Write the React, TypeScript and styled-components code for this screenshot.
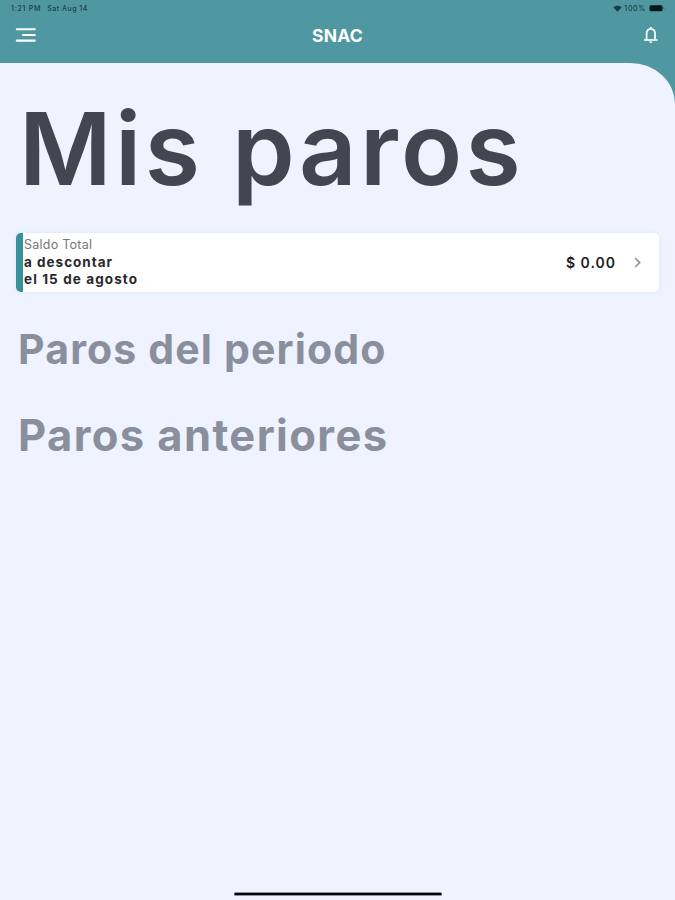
import React from 'react';
import styled, { createGlobalStyle } from 'styled-components';

const GlobalStyle = createGlobalStyle`
  * { box-sizing: border-box; }
  body { margin: 0; background: #4f98a1; }
`;

const Screen = styled.div`
  width: 100%;
  height: 900px;
  display: flex;
  flex-direction: column;
  overflow: hidden;
  background: #4f98a1;
  font-family: Inter, "Liberation Sans", sans-serif;
`;

const StatusBar = styled.div`
  height: 16px;
  padding: 1px 10px 0 11px;
  display: flex;
  align-items: center;
  justify-content: space-between;
  color: #173f47;
  font-size: 7px;
  font-weight: 500;
  line-height: 15px;
  white-space: pre;
`;

const StatusGroup = styled.div<{ $gap: number }>`
  display: flex;
  align-items: center;
  gap: ${(p) => p.$gap}px;
`;

const StatusText = styled.span<{ $spacing: number }>`
  letter-spacing: ${(p) => p.$spacing}px;
`;

const NavBar = styled.header`
  height: 47px;
  padding: 0 16px 9px 15px;
  display: grid;
  grid-template-columns: 22px 1fr 22px;
  align-items: center;
`;

const NavTitle = styled.div`
  color: #fff;
  font-size: 17.5px;
  font-weight: 650;
  line-height: 22px;
  letter-spacing: 0.25px;
  text-align: center;
  padding: 1px 0 0 1px;
`;

const IconButton = styled.button<{ $end?: boolean }>`
  display: flex;
  justify-content: ${(p) => (p.$end ? 'flex-end' : 'flex-start')};
  padding: 0;
  border: 0;
  background: none;
  color: #fff;
`;

const Content = styled.main`
  flex: 1;
  padding: 36px 16px 4px;
  display: flex;
  flex-direction: column;
  background: #eef3ff;
  border-top-right-radius: 45px 41px;
`;

const Title = styled.h1`
  margin: 0 0 34px 3px;
  color: #424650;
  font-size: 100.5px;
  font-weight: 600;
  line-height: 100px;
  letter-spacing: 3.35px;
  white-space: nowrap;
`;

const Card = styled.section`
  height: 59px;
  padding: 0 16px 0 1px;
  display: flex;
  align-items: center;
  justify-content: space-between;
  background: #fff;
  border-left: 7px solid #37909a;
  border-radius: 5px;
  box-shadow: 0 0 5px rgba(120, 150, 210, 0.12);
`;

const CardText = styled.div`
  display: flex;
  flex-direction: column;
`;

const CardLine = styled.span<{ $light?: boolean; $spacing: number }>`
  color: ${(p) => (p.$light ? '#777' : '#28282b')};
  font-size: ${(p) => (p.$light ? 12.5 : 13.5)}px;
  font-weight: ${(p) => (p.$light ? 400 : 650)};
  line-height: 17.5px;
  letter-spacing: ${(p) => p.$spacing}px;
`;

const CardEnd = styled.div`
  display: flex;
  align-items: center;
  gap: 17px;
`;

const Amount = styled.span`
  color: #1d1d20;
  font-size: 14px;
  font-weight: 600;
  line-height: 18px;
  letter-spacing: 1px;
`;

const Heading = styled.h2<{ $size: number; $top: number; $spacing: number }>`
  margin: ${(p) => p.$top}px 0 0 2px;
  color: #8a8f9e;
  font-size: ${(p) => p.$size}px;
  font-weight: 650;
  line-height: 50px;
  letter-spacing: ${(p) => p.$spacing}px;
  white-space: nowrap;
`;

const HomeIndicator = styled.div`
  width: 208px;
  height: 4px;
  margin: auto auto 0;
  border: solid #8f939c;
  border-width: 0.5px 0;
  border-radius: 2px;
  background: #05050c;
`;

const MenuIcon = () => (
  <svg width="22" height="16" viewBox="0 0 22 16" fill="none" stroke="currentColor" strokeWidth="2.1" strokeLinecap="round">
    <path d="M1.8 2.2H19.8M8 8H19.8M1.8 13.6H19.8" />
  </svg>
);

const BellIcon = () => (
  <svg width="16" height="18" viewBox="0 0 16 18" fill="none" stroke="currentColor" strokeWidth="1.7">
    <path d="M3.6 14V7.5C3.6 4.7 5.3 3 7.8 3S12 4.7 12 7.5V14" />
    <path d="M1 14H14.6" strokeWidth="1.6" />
    <path d="M7.8 3V1" strokeWidth="2" />
    <path d="M6.2 15.5H9.4C9.3 16.4 8.7 17 7.8 17S6.3 16.4 6.2 15.5Z" fill="currentColor" stroke="none" />
  </svg>
);

const WifiIcon = () => (
  <svg width="9" height="7" viewBox="0 0 9 7" fill="currentColor">
    <path d="M0.2 2.3C2.6 0.1 6.4 0.1 8.8 2.3L4.5 6.7Z" />
  </svg>
);

const BatteryIcon = () => (
  <svg width="17" height="7" viewBox="0 0 17 7">
    <rect x="1.5" y="0.3" width="13" height="6" rx="1.6" fill="#06171b" />
    <rect x="15.4" y="2.3" width="1" height="2" rx="0.5" fill="#2c666f" />
  </svg>
);

const ChevronIcon = () => (
  <svg width="10" height="12" viewBox="0 0 10 12" fill="none" stroke="#929295" strokeWidth="1.6">
    <path d="M2.1 1.2L6.7 5.6L2.1 10" />
  </svg>
);

export default function App() {
  return (
    <>
      <GlobalStyle />
      <Screen>
        <StatusBar>
          <StatusGroup $gap={6}>
            <StatusText $spacing={0.75}>1:21 PM</StatusText>
            <StatusText $spacing={0.5}>Sat Aug 14</StatusText>
          </StatusGroup>
          <StatusGroup $gap={2}>
            <WifiIcon />
            <StatusText $spacing={0.7}>100%</StatusText>
            <BatteryIcon />
          </StatusGroup>
        </StatusBar>
        <NavBar>
          <IconButton aria-label="Menú"><MenuIcon /></IconButton>
          <NavTitle>SNAC</NavTitle>
          <IconButton $end aria-label="Notificaciones"><BellIcon /></IconButton>
        </NavBar>
        <Content>
          <Title>Mis paros</Title>
          <Card>
            <CardText>
              <CardLine $light $spacing={0.25}>Saldo Total</CardLine>
              <CardLine $spacing={1}>a descontar</CardLine>
              <CardLine $spacing={1.1}>el 15 de agosto</CardLine>
            </CardText>
            <CardEnd>
              <Amount>$ 0.00</Amount>
              <ChevronIcon />
            </CardEnd>
          </Card>
          <Heading $size={41} $top={32} $spacing={1.15}>Paros del periodo</Heading>
          <Heading $size={43.5} $top={36} $spacing={1.4}>Paros anteriores</Heading>
          <HomeIndicator />
        </Content>
      </Screen>
    </>
  );
}
